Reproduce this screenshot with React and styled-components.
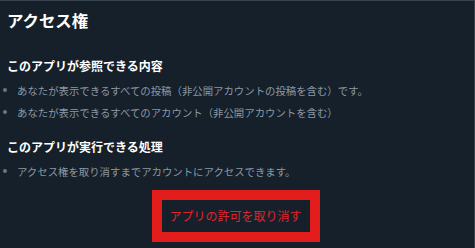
import React from "react";
import styled, { createGlobalStyle } from "styled-components";

const Global = createGlobalStyle`
  html, body { margin: 0; padding: 0; background: #15202b; }
  body { font-family: "Noto Sans CJK JP", "Noto Sans", sans-serif; }
`;

const Panel = styled.div`
  box-sizing: border-box;
  width: 475px;
  height: 248px;
  background: #15202b;
  border-top: 1px solid #38444d;
  border-right: 1px solid #38444d;
  padding: 9px 0 0 0;
  display: flex;
  flex-direction: column;
`;

const Title = styled.h1`
  margin: 0 0 0 7px;
  font-size: 16.4px;
  line-height: 20px;
  font-weight: 700;
  color: #ffffff;
`;

const Heading = styled.h2`
  margin: ${(p) => p.$top}px 0 0 7px;
  font-size: 12px;
  line-height: 16px;
  font-weight: 700;
  color: #ffffff;
`;

const List = styled.ul`
  list-style: none;
  margin: 5px 0 0 0;
  padding: 0;
`;

const Item = styled.li`
  display: flex;
  align-items: center;
  height: 22px;
  font-size: 10.4px;
  color: #8b98a5;
  white-space: nowrap;
  &::before {
    content: "";
    width: 4px;
    height: 4px;
    border-radius: 50%;
    background: #6e7781;
    margin: 0 10px 0 3px;
    flex: none;
  }
`;

const Footer = styled.div`
  display: flex;
  justify-content: center;
  margin-top: 8px;
  padding-right: 3px;
`;

const RevokeBox = styled.div`
  box-sizing: border-box;
  width: 168px;
  height: 52px;
  border: 10px solid #e31c1c;
  display: flex;
  align-items: center;
  justify-content: center;
`;

const Revoke = styled.button`
  background: none;
  border: none;
  padding: 0;
  font-family: inherit;
  font-size: 12px;
  line-height: 16px;
  color: #e0242b;
  cursor: pointer;
`;

export default function App() {
  return (
    <>
      <Global />
      <Panel>
        <Title>アクセス権</Title>
        <Heading $top={28}>このアプリが参照できる内容</Heading>
        <List>
          <Item>あなたが表示できるすべての投稿（非公開アカウントの投稿を含む）です。</Item>
          <Item>あなたが表示できるすべてのアカウント（非公開アカウントを含む）</Item>
        </List>
        <Heading $top={16}>このアプリが実行できる処理</Heading>
        <List>
          <Item>アクセス権を取り消すまでアカウントにアクセスできます。</Item>
        </List>
        <Footer>
          <RevokeBox>
            <Revoke>アプリの許可を取り消す</Revoke>
          </RevokeBox>
        </Footer>
      </Panel>
    </>
  );
}
